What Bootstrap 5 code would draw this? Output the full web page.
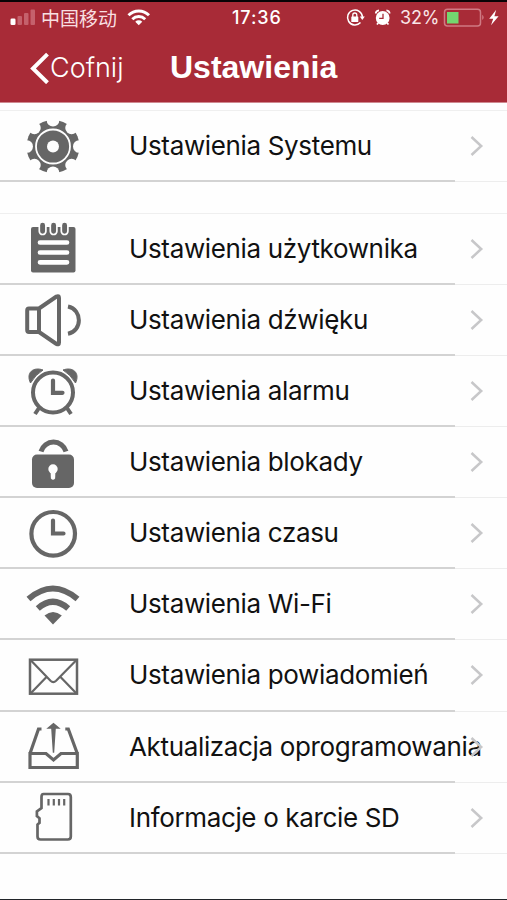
<!DOCTYPE html>
<html lang="pl">
<head>
<meta charset="utf-8">
<meta name="viewport" content="width=device-width, initial-scale=1">
<title>Ustawienia</title>
<link href="https://cdn.jsdelivr.net/npm/bootstrap@5.3.0/dist/css/bootstrap.min.css" rel="stylesheet">
<style>
html,body{height:900px;overflow:hidden}
body{font-family:Inter,"Noto Sans CJK SC",sans-serif;background:#fefefe;color:#111;border-top:2px solid #080305}
.app-head{background:#a82b37;height:101px;border-bottom:1px solid #cf8990}
.status{height:32px;font-size:18px;line-height:32px}
.status-left{width:232px}
.carrier{font-family:"Noto Sans CJK SC",sans-serif;font-size:19px;color:#f8dfe1;width:76px;margin-left:5px}
.clock{width:52px;font-weight:500;letter-spacing:.9px}
.pct{width:40px;color:#fae6e8;letter-spacing:-.2px}
.title-row{height:66px}
.back{width:170px;padding-left:29px;font-size:27px;font-weight:300;line-height:66px;letter-spacing:0}
.back span{padding-top:2px}
.page-title{font:bold 32px/66px "Liberation Sans",Arial,sans-serif;margin:0}
.list-area{padding-top:7px}
.group-list{border-top:1px solid #efefef}
.group-gap{height:30.4px}
.entry{height:71.15px;padding-bottom:1px;background:linear-gradient(#d3d3d3,#d3d3d3) 0 100%/455px 2px no-repeat,linear-gradient(#ededed,#ededed) 100% 100%/52px 1px no-repeat}
.entry-icon{width:129px;height:71px;flex:none;color:#666}
.entry-text{font-size:26px;line-height:70px;white-space:nowrap;width:341px;letter-spacing:-.35px}
.chev{width:14px;height:22px;flex:none}
</style>
</head>
<body>
<header class="app-head text-white">
  <div class="status d-flex">
    <div class="status-left d-flex align-items-center">
      <svg width="36" height="32" viewBox="0 2 36 32"><rect x="10.500" y="18.500" width="5" height="6.500" rx="1.300" fill="#fff"/><g fill="#c5616c"><rect x="17.500" y="16" width="4.500" height="9" rx="1"/><rect x="24" y="13" width="4.500" height="12" rx="1"/><rect x="30.500" y="9.500" width="4.500" height="15.500" rx="1"/></g></svg>
      <span class="carrier">中国移动</span>
      <svg width="36" height="32" viewBox="117 2 36 32" fill="none" stroke="#fff" stroke-width="2.900"><path d="M128.500 15.300a14.500 14.500 0 0 1 20.500 0M132.300 19.200a9.200 9.200 0 0 1 12.900 0"/><path d="M138.750 25.300l-3.500-3.500a5 5 0 0 1 7 0z" fill="#fff" stroke="none"/></svg>
    </div>
    <span class="clock">17:36</span>
    <svg width="116" height="32" viewBox="284 2 116 32" fill="none" stroke="#fff">
      <path d="M360.500 22.600a7.500 7.500 0 1 1 2-5.600" stroke-width="1.500"/><path d="M359.800 16.500h5l-2.500 3.500z" fill="#fff" stroke="none"/><rect x="351.300" y="16.500" width="7" height="5.500" rx=".6" fill="#fff" stroke="none"/><path d="M352.800 17v-2a2 2 0 0 1 4 0v2" stroke-width="1.300"/>
      <circle cx="382.700" cy="18" r="6.900" fill="#fff" stroke="none"/><path d="M383 13.800v4.500h-3.800" stroke="#a82b37" stroke-width="1.300"/><path d="M375.800 13.600q0-3 3.200-3.300M389.600 13.600q0-3-3.200-3.300M378.300 23l-1.400 1.500M387.100 23l1.400 1.500" stroke-width="1.800"/>
    </svg>
    <span class="pct">32%</span>
    <svg width="67" height="32" viewBox="440 2 67 32"><rect x="444.500" y="9.200" width="36" height="16.800" rx="3" fill="none" stroke="#cf7a83" stroke-width="1.500"/><rect x="447" y="12" width="11.500" height="11.500" fill="#74d66f"/><path d="M482.200 14.700q3 2.700 0 5.400z" fill="#cf7a83"/><path d="M496.200 9.800l-7 8.900h4l-2.200 6.500 7.600-9h-4.200z" fill="#fff"/></svg>
  </div>
  <div class="title-row d-flex">
    <div class="back d-flex align-items-center"><svg width="21" height="34" viewBox="29 50 21 34" fill="none" stroke="#fff" stroke-width="4"><path d="M47.500 54.200L33 68.500l14.500 14.200"/></svg><span>Cofnij</span></div>
    <h1 class="page-title">Ustawienia</h1>
  </div>
</header>

<main class="list-area">
  <div class="group-list" id="system"></div>
  <div class="group-gap"></div>
  <div class="group-list" id="device"></div>
</main>

<script>
const icons = {
gear:[110.5,`<circle cx="53" cy="146" r="26.500" fill="currentColor"/><g fill="#fefefe">${[0,45,90,135,180,225,270,315].map(a=>`<ellipse cx="53" cy="120" rx="6.300" ry="6" transform="rotate(${a} 53 146)"/>`).join('')}<circle cx="53" cy="146" r="6"/></g><circle cx="53" cy="146" r="17" fill="none" stroke="#fefefe" stroke-width="1.800"/>`],
note:[213,`<rect x="31" y="227" width="44.500" height="45.500" rx="2" fill="currentColor"/><g fill="currentColor" stroke="#fefefe" stroke-width="1.700"><rect x="39.300" y="222" width="6.600" height="12.500" rx="3.300"/><rect x="50.300" y="222" width="6.600" height="12.500" rx="3.300"/><rect x="61.300" y="222" width="6.600" height="12.500" rx="3.300"/></g><path d="M40 242.500h27M40 252.500h27M40 262.300h27" stroke="#fefefe" stroke-width="4.700" stroke-linecap="round"/>`],
sound:[284,`<g fill="none" stroke="currentColor" stroke-width="4" stroke-linejoin="round"><path d="M39 308.500H29q-1.800 0-1.800 2v19.500q0 2 1.800 2h10zM39 308.500l17.500-12q2.500-1.200 2.500 1.500v44.500q0 2.700-2.500 1.500L39 332"/><path d="M68 306.500c14.500 3 14.500 24.500 0 27.300"/></g>`],
alarm:[355,`<g fill="none" stroke="currentColor" stroke-width="4" stroke-linecap="round"><circle cx="53" cy="392.500" r="20"/><path d="M53 380.500v12.300h9.500" stroke-width="4.200"/><path d="M39 408l-4 6M67 408l4 6" stroke-linecap="butt"/></g><path d="M30.500 383C25.500 372.500 33.500 366.500 43 370Q35.500 374.500 30.500 383zM75.500 383C80.500 372.500 72.500 366.500 63 370Q70.500 374.500 75.500 383z" fill="currentColor" stroke="currentColor" stroke-width="1"/>`],
lock:[426.5,`<rect x="32" y="454" width="42" height="33.500" rx="5" fill="currentColor"/><path d="M41 451a13 13 0 0 1 25 0" fill="none" stroke="currentColor" stroke-width="5"/><circle cx="53" cy="468.500" r="4.700" fill="#fefefe"/><path d="M50.500 470h5l-.4 8q-2.100 2.500-4.200 0z" fill="#fefefe"/>`],
clock:[497.5,`<g fill="none" stroke="currentColor" stroke-width="4.200"><circle cx="53.200" cy="533.300" r="21.800"/><path d="M53 520v13h10.500" stroke-linecap="round"/></g>`],
wifi:[568.5,`<g fill="none" stroke="currentColor" stroke-width="6"><path d="M28.500 598.500Q52.800 577.500 77.500 598.500M37.800 608Q52.800 594.500 68.200 608"/></g><path d="M44.500 615Q53 608 61.800 615L53 624z" fill="currentColor"/>`],
mail:[639.5,`<g fill="none" stroke="currentColor" stroke-width="2.500"><rect x="30" y="659.200" width="47" height="34"/><path d="M31 660l19.500 20.300q2.800 2.500 5.600 0L76 660M31 692.500l15.500-16M76 692.500l-15.500-16" stroke-width="2.200"/></g>`],
upload:[710.5,`<g fill="none" stroke="currentColor" stroke-width="3.200"><path d="M30 753v14h47.300v-14H61l-7.500 6.500-7.500-6.500zM30 753l8.500-24.500h3M77.300 753l-9-24.500h-3"/></g><path d="M53.500 722.300l7.200 6h-4.900l-1.600 24h-1.400l-1.600-24h-4.900z" fill="currentColor"/>`],
sd:[782,`<g fill="none" stroke="currentColor" stroke-width="2.700"><path d="M43.500 794h24.500q2.800 0 2.800 3v39.500q0 3-3 3H40.500q-3 0-3-3V824.500l2-1.700v-4.500l-2.600-2.200v-4.600l4.600-3.500V797q0-3 2-3z"/><path d="M48.500 799v6.500M53.800 799v6.500M59 799v6.500M64.200 799v6.500" stroke-width="2.200"/></g>`]
};
const render = (id, rows) => document.getElementById(id).innerHTML = rows.map(([k,t]) =>
 `<div class="entry d-flex align-items-center"><svg class="entry-icon" viewBox="0 ${icons[k][0]} 129 71">${icons[k][1]}</svg><div class="entry-text">${t}</div><svg class="chev" viewBox="470 135 14 22"><path d="M471.500 137l9.700 9-9.700 9" fill="none" stroke="#c7c7c9" stroke-width="2.500"/></svg></div>`).join('');
render('system', [['gear','Ustawienia Systemu']]);
render('device', [['note','Ustawienia użytkownika'],['sound','Ustawienia dźwięku'],['alarm','Ustawienia alarmu'],['lock','Ustawienia blokady'],['clock','Ustawienia czasu'],['wifi','Ustawienia Wi-Fi'],['mail','Ustawienia powiadomień'],['upload','Aktualizacja oprogramowania'],['sd','Informacje o karcie SD']]);
</script>
<footer class="fixed-bottom border-top border-dark"></footer>
<script src="https://cdn.jsdelivr.net/npm/bootstrap@5.3.0/dist/js/bootstrap.bundle.min.js"></script>
</body>
</html>
